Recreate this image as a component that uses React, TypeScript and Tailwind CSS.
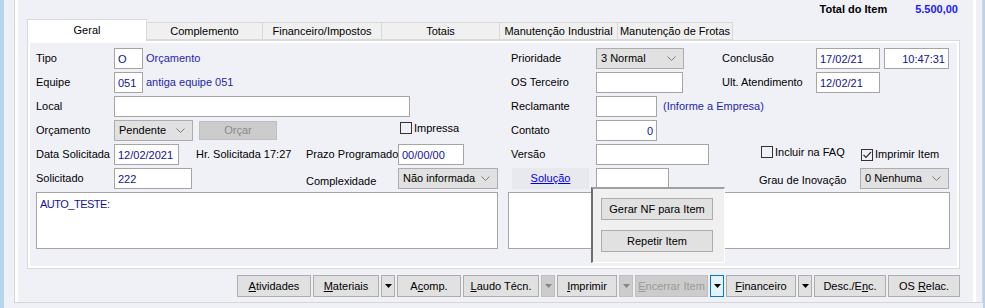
import type { ReactNode } from "react";

const font = "font-['Liberation_Sans',Arial,sans-serif]";

function Label({ w, children }: { w: string; children: ReactNode }) {
  return <div className={`${w} shrink-0 whitespace-nowrap pt-[2px] text-black`}>{children}</div>;
}

function Field({ w, value, right }: { w: string; value?: string; right?: boolean }) {
  return (
    <div
      className={`${w} h-[21px] shrink-0 border border-[#a5a5a5] bg-white px-[3px] pt-[3px] leading-[14px] text-[#12129a] ${
        right ? "text-right" : ""
      }`}
    >
      {value}
    </div>
  );
}

function Chevron() {
  return (
    <svg width="9" height="6" viewBox="0 0 9 6" className="shrink-0">
      <polyline points="0.5,0.5 4.5,4.5 8.5,0.5" fill="none" stroke="#7a7a7a" strokeWidth="1" />
    </svg>
  );
}

function Select({ w, value }: { w: string; value: string }) {
  return (
    <div
      className={`${w} flex h-[21px] shrink-0 items-center justify-between whitespace-nowrap border border-[#adadad] bg-[#e1e1e1] pl-[4px] pr-[7px] text-black`}
    >
      <span>{value}</span>
      <Chevron />
    </div>
  );
}

function Check({ label, checked }: { label: string; checked?: boolean }) {
  return (
    <div className="flex items-center gap-[2px] whitespace-nowrap text-black">
      <div className="relative h-[12px] w-[12px] border border-[#333] bg-transparent">
        {checked ? (
          <svg width="10" height="10" viewBox="0 0 10 10" className="absolute left-0 top-0">
            <polyline points="1.5,5 4,7.5 9,2" fill="none" stroke="#333" strokeWidth="1.2" />
          </svg>
        ) : null}
      </div>
      <span>{label}</span>
    </div>
  );
}

function Arrow({ color = "#000" }: { color?: string }) {
  return (
    <svg width="7" height="4" viewBox="0 0 7 4">
      <polygon points="0,0 7,0 3.5,4" fill={color} />
    </svg>
  );
}

function Btn({ w, children, disabled }: { w: string; children: ReactNode; disabled?: boolean }) {
  return (
    <div
      className={`${w} flex h-[22px] shrink-0 items-center justify-center whitespace-nowrap border ${
        disabled
          ? "border-[#bfbfbf] bg-[#cccccc] text-[#9a9a9a]"
          : "border-[#adadad] bg-[#e1e1e1] text-black"
      }`}
    >
      {children}
    </div>
  );
}

function ArrowBtn({ disabled, focused }: { disabled?: boolean; focused?: boolean }) {
  const cls = focused
    ? "border-[#0078d7] bg-[#e5f1fb]"
    : disabled
      ? "border-[#bfbfbf] bg-[#cccccc]"
      : "border-[#adadad] bg-[#e1e1e1]";
  return (
    <div className={`flex h-[22px] w-[14px] shrink-0 items-center justify-center border ${cls}`}>
      <Arrow color={disabled ? "#848484" : "#000"} />
    </div>
  );
}

const tabs = [
  { t: "Complemento", w: "w-[116px]" },
  { t: "Financeiro/Impostos", w: "w-[119px]" },
  { t: "Totais", w: "w-[118px]" },
  { t: "Manutenção Industrial", w: "w-[118px]" },
  { t: "Manutenção de Frotas", w: "w-[115px]" },
];

export default function App() {
  return (
    <div className={`relative flex h-[308px] w-[985px] overflow-hidden bg-[#f0f1f7] text-[11px] ${font}`}>
      <div className="w-[4px] shrink-0 bg-[#b8d3ec]" />
      <div className="ml-[10px] flex h-[303px] w-[969px] shrink-0 border-b border-l border-r border-[#d6d6d6] pr-[6px]">
        <div className="flex flex-1 flex-col border-l-[3px] border-r-[3px] border-white pl-[9px] pr-[13px]">
          {/* total */}
          <div className="flex h-[19px] items-center justify-end pr-[2px] font-bold">
            <span className="text-black">Total do Item</span>
            <span className="ml-[28px] text-[#1a1aff]">5.500,00</span>
          </div>

          {/* tabs */}
          <div className="flex h-[21px] items-end">
            <div className="z-10 -mb-px flex h-[22px] w-[120px] items-center justify-center border border-b-0 border-[#d9d9d9] bg-white text-black">
              Geral
            </div>
            {tabs.map((tab) => (
              <div
                key={tab.t}
                className={`${tab.w} flex h-[18px] items-center justify-center whitespace-nowrap border border-l-0 border-[#d9d9d9] bg-[#f0f0f0] text-black`}
              >
                {tab.t}
              </div>
            ))}
          </div>

          {/* panel */}
          <div className="flex h-[229px] flex-col gap-[3px] border border-[#dadada] pl-[8px] pt-[7px] shadow-[inset_0_0_0_2px_#ffffff]">
            <div className="flex h-[21px]">
              <Label w="w-[78px]">Tipo</Label>
              <Field w="w-[29px]" value="O" />
              <div className="w-[368px] shrink-0 pl-[3px] pt-[2px] text-[#1f1fb0]">Orçamento</div>
              <Label w="w-[85px]">Prioridade</Label>
              <Select w="w-[88px]" value="3 Normal" />
              <div className="w-[38px] shrink-0" />
              <Label w="w-[94px]">Conclusão</Label>
              <Field w="w-[64px]" value="17/02/21" />
              <div className="w-[4px] shrink-0" />
              <Field w="w-[65px]" value="10:47:31" right />
            </div>

            <div className="flex h-[21px]">
              <Label w="w-[78px]">Equipe</Label>
              <Field w="w-[29px]" value="051" />
              <div className="w-[368px] shrink-0 pl-[3px] pt-[2px] text-[#1f1fb0]">antiga equipe 051</div>
              <Label w="w-[85px]">OS Terceiro</Label>
              <Field w="w-[87px]" />
              <div className="w-[39px] shrink-0" />
              <Label w="w-[94px]">Ult. Atendimento</Label>
              <Field w="w-[64px]" value="12/02/21" />
            </div>

            <div className="flex h-[21px]">
              <Label w="w-[78px]">Local</Label>
              <Field w="w-[296px]" />
              <div className="w-[101px] shrink-0" />
              <Label w="w-[85px]">Reclamante</Label>
              <Field w="w-[61px]" />
              <div className="pl-[6px] pt-[2px] text-[#1f1fb0]">(Informe a Empresa)</div>
            </div>

            <div className="flex h-[21px]">
              <Label w="w-[78px]">Orçamento</Label>
              <Select w="w-[79px]" value="Pendente" />
              <div className="ml-[6px] mt-[1px] flex h-[19px] w-[78px] shrink-0 items-center justify-center border border-[#bfbfbf] bg-[#cccccc] text-[#8a8a8a]">
                Orçar
              </div>
              <div className="w-[123px] shrink-0" />
              <div className="w-[111px] shrink-0">
                <Check label="Impressa" />
              </div>
              <Label w="w-[85px]">Contato</Label>
              <Field w="w-[61px]" value="0" right />
            </div>

            <div className="flex h-[21px]">
              <Label w="w-[78px]">Data Solicitada</Label>
              <Field w="w-[65px]" value="12/02/2021" />
              <div className="w-[127px] shrink-0 whitespace-nowrap pl-[17px] pt-[2px] text-black">Hr. Solicitada 17:27</div>
              <Label w="w-[92px]">Prazo Programado</Label>
              <Field w="w-[66px]" value="00/00/00" />
              <div className="w-[47px] shrink-0" />
              <Label w="w-[85px]">Versão</Label>
              <Field w="w-[113px]" />
              <div className="w-[52px] shrink-0" />
              <div className="w-[100px] shrink-0">
                <Check label="Incluir na FAQ" />
              </div>
              <Check label="Imprimir Item" checked />
            </div>

            <div className="flex h-[21px]">
              <Label w="w-[78px]">Solicitado</Label>
              <Field w="w-[78px]" value="222" />
              <div className="w-[114px] shrink-0" />
              <div className="w-[92px] shrink-0 whitespace-nowrap pt-[5px] text-black">Complexidade</div>
              <Select w="w-[100px]" value="Não informada" />
              <div className="w-[14px] shrink-0" />
              <div className="flex w-[77px] shrink-0 items-center justify-center bg-[#e8e9ef] text-[#0000ee] underline">
                Solução
              </div>
              <div className="w-[7px] shrink-0" />
              <Field w="w-[73px]" />
              <div className="w-[90px] shrink-0" />
              <div className="w-[101px] shrink-0 whitespace-nowrap pt-[4px] text-black">Grau de Inovação</div>
              <Select w="w-[89px]" value="0 Nenhuma" />
            </div>

            <div className="flex h-[57px] gap-[10px]">
              <div className="w-[462px] border border-[#a5a5a5] bg-white px-[3px] pt-[3px] tracking-[-0.5px] text-[#12129a]">
                AUTO_TESTE:
              </div>
              <div className="w-[442px] border border-[#a5a5a5] bg-white" />
            </div>
          </div>

          {/* bottom buttons */}
          <div className="mt-[6px] flex justify-end gap-[2px] pr-0">
            <Btn w="w-[74px]">
              <span><u>A</u>tividades</span>
            </Btn>
            <Btn w="w-[66px]">
              <span><u>M</u>ateriais</span>
            </Btn>
            <ArrowBtn />
            <Btn w="w-[64px]">
              <span>A<u>c</u>omp.</span>
            </Btn>
            <Btn w="w-[76px]">
              <span><u>L</u>audo Técn.</span>
            </Btn>
            <ArrowBtn disabled />
            <Btn w="w-[60px]">
              <span><u>I</u>mprimir</span>
            </Btn>
            <ArrowBtn disabled />
            <Btn w="w-[73px]" disabled>
              <span><u>E</u>ncerrar Item</span>
            </Btn>
            <ArrowBtn focused />
            <Btn w="w-[70px]">
              <span><u>F</u>inanceiro</span>
            </Btn>
            <ArrowBtn />
            <Btn w="w-[72px]">
              <span>Desc./E<u>n</u>c.</span>
            </Btn>
            <Btn w="w-[72px]">
              <span>OS <u>R</u>elac.</span>
            </Btn>
          </div>
        </div>
      </div>
      <div className="w-[2px] shrink-0 bg-[#b8d3ec]" />

      {/* popup menu */}
      <div className="absolute left-[591px] top-[187px] flex h-[76px] w-[134px] flex-col gap-[10px] border-b border-l-2 border-r border-t-2 border-b-white border-l-[#6e6e6e] border-r-white border-t-[#a0a0a0] bg-[#f0f0f0] pl-[8px] pt-[9px]">
        <Btn w="w-[112px]">Gerar NF para Item</Btn>
        <Btn w="w-[112px]">Repetir Item</Btn>
      </div>
    </div>
  );
}
